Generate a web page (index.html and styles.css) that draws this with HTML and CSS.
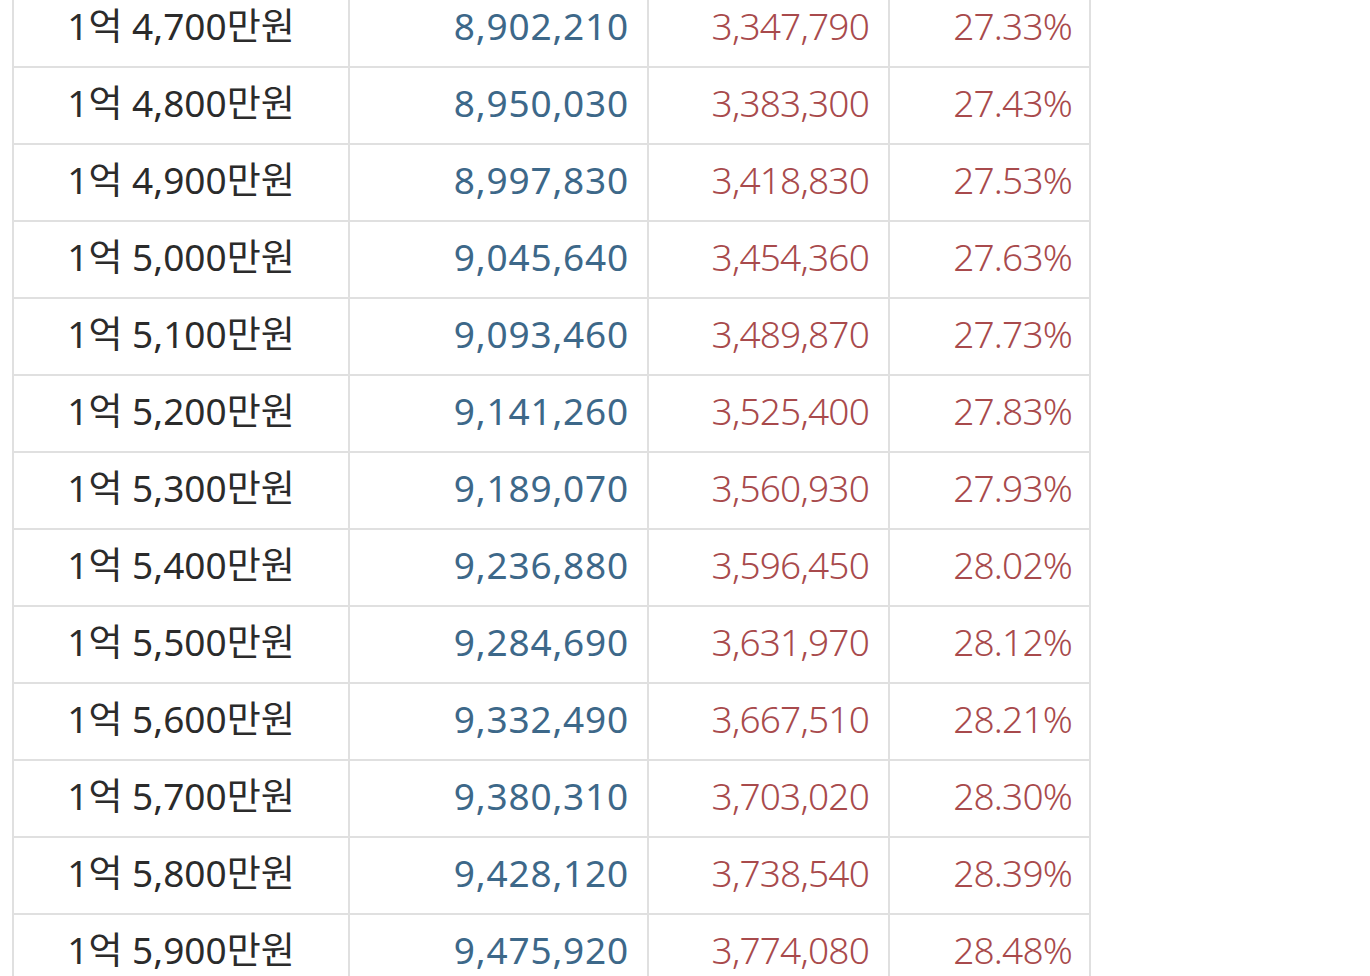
FILE: index.html
```html
<!DOCTYPE html>
<html lang="ko">
<head>
<meta charset="utf-8">
<link rel="stylesheet" href="styles.css">
</head>
<body>
<table class="tax">
<colgroup><col class="c1"><col class="c2"><col class="c3"><col class="c4"></colgroup>
<tbody>
<tr><td class="sal">1억 4,700만원</td><td class="net">8,902,210</td><td class="tx">3,347,790</td><td class="tx pct">27.33%</td></tr>
<tr><td class="sal">1억 4,800만원</td><td class="net">8,950,030</td><td class="tx">3,383,300</td><td class="tx pct">27.43%</td></tr>
<tr><td class="sal">1억 4,900만원</td><td class="net">8,997,830</td><td class="tx">3,418,830</td><td class="tx pct">27.53%</td></tr>
<tr><td class="sal">1억 5,000만원</td><td class="net">9,045,640</td><td class="tx">3,454,360</td><td class="tx pct">27.63%</td></tr>
<tr><td class="sal">1억 5,100만원</td><td class="net">9,093,460</td><td class="tx">3,489,870</td><td class="tx pct">27.73%</td></tr>
<tr><td class="sal">1억 5,200만원</td><td class="net">9,141,260</td><td class="tx">3,525,400</td><td class="tx pct">27.83%</td></tr>
<tr><td class="sal">1억 5,300만원</td><td class="net">9,189,070</td><td class="tx">3,560,930</td><td class="tx pct">27.93%</td></tr>
<tr><td class="sal">1억 5,400만원</td><td class="net">9,236,880</td><td class="tx">3,596,450</td><td class="tx pct">28.02%</td></tr>
<tr><td class="sal">1억 5,500만원</td><td class="net">9,284,690</td><td class="tx">3,631,970</td><td class="tx pct">28.12%</td></tr>
<tr><td class="sal">1억 5,600만원</td><td class="net">9,332,490</td><td class="tx">3,667,510</td><td class="tx pct">28.21%</td></tr>
<tr><td class="sal">1억 5,700만원</td><td class="net">9,380,310</td><td class="tx">3,703,020</td><td class="tx pct">28.30%</td></tr>
<tr><td class="sal">1억 5,800만원</td><td class="net">9,428,120</td><td class="tx">3,738,540</td><td class="tx pct">28.39%</td></tr>
<tr><td class="sal">1억 5,900만원</td><td class="net">9,475,920</td><td class="tx">3,774,080</td><td class="tx pct">28.48%</td></tr>
</tbody>
</table>
</body>
</html>
```
FILE: styles.css
```css
html, body {
  margin: 0;
  padding: 0;
  background: #ffffff;
  overflow: hidden;
}
body {
  font-family: "Noto Sans", "Noto Sans CJK KR", sans-serif;
}
.tax {
  border-collapse: collapse;
  table-layout: fixed;
  width: 1077px;
  margin: -11px 0 0 12px;
}
.c1 { width: 336px; }
.c2 { width: 299px; }
.c3 { width: 241px; }
.c4 { width: 201px; }
.tax td {
  height: 68px;
  padding: 0 19px 7px 0;
  border: 2px solid #e0e0e0;
  font-size: 37px;
  line-height: 1;
  white-space: nowrap;
  text-align: right;
  font-weight: 300;
}
.tax td.sal {
  text-align: center;
  padding: 0 0 7px 0;
  color: #2b2b2b;
  font-weight: 400;
  letter-spacing: 0;
}
.tax td.net {
  color: #3d6889;
  font-weight: 400;
  letter-spacing: 0.8px;
  padding-right: 18px;
}
.tax td.tx {
  color: #a84a4c;
  letter-spacing: -0.8px;
}
.tax td.pct {
  padding-right: 17px;
}
```
